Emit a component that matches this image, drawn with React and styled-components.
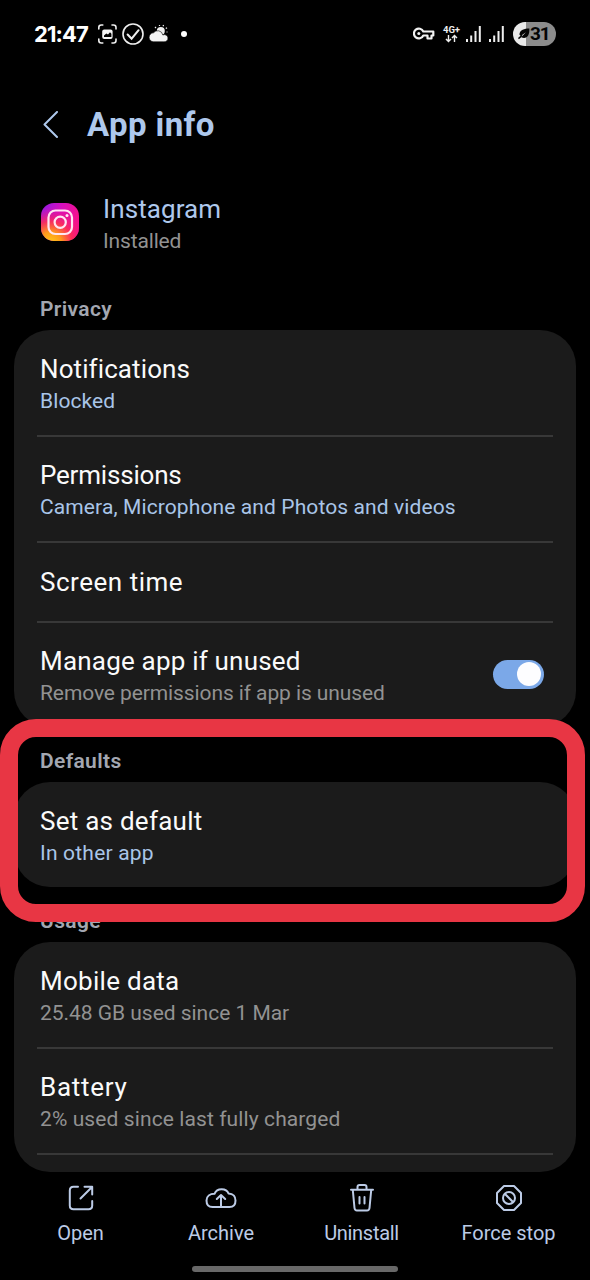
import React from 'react';
import styled, { createGlobalStyle } from 'styled-components';

const GlobalStyle = createGlobalStyle`
  * { box-sizing: border-box; }
  body {
    margin: 0;
    background: #000;
    font-family: Roboto, Inter, sans-serif;
  }
`;

const Screen = styled.div`
  width: 590px;
  height: 1280px;
  overflow: hidden;
  background: #000;
  color: #fafafa;
  display: flex;
  flex-direction: column;
`;

const StatusBar = styled.div`
  height: 68px;
  padding: 0 34px;
  display: flex;
  align-items: center;
  justify-content: space-between;
  flex-shrink: 0;
`;

const StatusGroup = styled.div`
  display: flex;
  align-items: center;
`;

const Clock = styled.span`
  font: 700 22px/24px Inter, sans-serif;
  letter-spacing: -0.9px;
  width: 63px;
  color: #fff;
`;

const Network = styled.span`
  display: flex;
  flex-direction: column;
  align-items: center;
  width: 19px;
  margin: 0 2px 0 7px;
  font: 700 9.500px/9px Roboto, sans-serif;
  color: #eee;
`;

const Battery = styled.div`
  width: 43px;
  height: 24px;
  margin-left: 4px;
  border-radius: 12px;
  display: flex;
  align-items: center;
  padding-left: 5px;
  background: linear-gradient(to right, #e9e9e9 13px, #8c8c8c 13px);
  color: #050505;
  font: 700 19px/24px Roboto, sans-serif;
  letter-spacing: -1.2px;
`;

const Header = styled.header`
  height: 114px;
  padding: 0 43px;
  display: flex;
  align-items: center;
  gap: 28px;
  flex-shrink: 0;
`;

const Title = styled.h1`
  margin: 0;
  font-size: 33px;
  line-height: 40px;
  font-weight: 700;
  letter-spacing: ${p => p.$track || 0}px;
  color: #aec8ec;
`;

const AppRow = styled.div`
  height: 93px;
  padding: 11px 41px 0;
  display: flex;
  gap: 24px;
  flex-shrink: 0;
`;

const AppIcon = styled.svg`
  width: 38px;
  height: 38px;
  margin-top: 10px;
`;

const Stack = styled.div`
  display: flex;
  flex-direction: column;
  flex: 1;
`;

const SectionLabel = styled.h2`
  margin: 0;
  height: 55px;
  padding: 18px 40px 0;
  font-size: 21px;
  line-height: 32px;
  font-weight: 600;
  letter-spacing: 0.35px;
  color: #a3a7b1;
  flex-shrink: 0;
`;

const Card = styled.section`
  width: 562px;
  height: ${p => p.$height}px;
  margin-left: 14px;
  border-radius: 36px;
  background: #1b1b1b;
  overflow: hidden;
  flex-shrink: 0;
`;

const Row = styled.div`
  height: ${p => p.$height || 106}px;
  padding: ${p => p.$top || 23}px 32px 0 26px;
  display: flex;
`;

const Divider = styled.div`
  height: 2px;
  margin: -1px 23px;
  background: #383838;
`;

const Label = styled.span`
  font-size: 26px;
  line-height: 32px;
  letter-spacing: ${p => p.$track || 0}px;
  color: ${p => p.$color || '#fafafa'};
`;

const Sub = styled.span`
  font-size: 21px;
  line-height: 32px;
  letter-spacing: ${p => p.$track || 0}px;
  color: ${p => (p.$accent ? '#a9c5e8' : '#929292')};
`;

const Switch = styled.span`
  width: 51px;
  height: 29px;
  margin-top: 15px;
  padding: 2px 3px;
  border-radius: 15px;
  background: #7ba8e8;
  display: flex;
  justify-content: flex-end;
  &::after {
    content: '';
    width: 24px;
    height: 24px;
    border-radius: 50%;
    background: #fdfdff;
  }
`;

const Highlighted = styled.div`
  position: relative;
  flex-shrink: 0;
`;

const Marker = styled.div`
  position: absolute;
  left: 0;
  top: -8px;
  width: 585px;
  height: 203px;
  border: 18px solid #e83644;
  border-radius: 36px;
  z-index: 1;
`;

const BottomBar = styled.nav`
  height: 94px;
  padding: 0 5px 0 10px;
  display: grid;
  grid-template-columns: 141px 140px 141px 153px;
  flex-shrink: 0;
`;

const Action = styled.div`
  display: flex;
  flex-direction: column;
  align-items: center;
  padding-top: 12px;
  gap: 5px;
  color: #bccbe6;
  font-size: 20px;
  line-height: 32px;
  letter-spacing: ${p => p.$track || 0}px;
  white-space: nowrap;
  svg {
    width: 28px;
    height: 28px;
    fill: none;
    stroke: currentColor;
    stroke-width: 2;
    stroke-linecap: round;
    stroke-linejoin: round;
  }
`;

const HomeBar = styled.div`
  width: 206px;
  height: 6px;
  border-radius: 3px;
  margin: 0 auto;
  background: #686868;
`;

const Signal = () => (
  <svg width="23" height="22" viewBox="0 0 23 22" fill="#eee">
    <rect x="3" y="16" width="2" height="3" />
    <rect x="7.2" y="12.5" width="2" height="6.5" />
    <rect x="11.5" y="8" width="2" height="11" />
    <rect x="15.8" y="3" width="2" height="16" />
  </svg>
);

const StatusLeft = () => (
  <StatusGroup>
    <Clock>21:47</Clock>
    <svg width="94" height="24" viewBox="97 22 94 24" fill="none">
      <g stroke="#eee" strokeWidth="1.6" strokeLinecap="round">
        <path d="M98.8 29v-1.500q0-2.500 2.500-2.500h1.500M112 25h1.500q2.500 0 2.500 2.500V29M116 39v1.500q0 2.500-2.500 2.500H112M102.800 43h-1.500q-2.500 0-2.500-2.500V39" />
        <circle cx="133" cy="34" r="10" />
        <path d="M127.600 34.500l4 4.200 7-8.500" strokeWidth="2" />
      </g>
      <rect x="102.200" y="29.500" width="10.400" height="9.500" rx="2" fill="#f4f4f4" />
      <path d="M104 37v-1.500l2.300-2 1.700 1 2-2.200 1.400 1.500V37z" fill="#000" />
      <circle cx="160.800" cy="31" r="4" fill="#eee" />
      <path d="M156 28l-1-1M159.500 26v-1M163 26.300l.6-1.200M165.800 28.500l1.200-.8M166.500 32h1" stroke="#eee" strokeWidth="1.200" />
      <path d="M153.700 41.800a4.500 4.500 0 0 1-.2-9 5.200 5.200 0 0 1 9.300 2.200 3.600 3.600 0 1 1 1 6.800z" fill="#f4f4f4" stroke="#000" strokeWidth=".6" />
      <circle cx="184" cy="34" r="3" fill="#fff" />
    </svg>
  </StatusGroup>
);

const StatusRight = () => (
  <StatusGroup>
    <svg width="22" height="14" viewBox="0 0 22 14" fill="none" stroke="#f2f2f2" strokeWidth="2.200" strokeLinejoin="round">
      <path d="M10.300 4.500H20.300V8.500H18.500V11.500H14.500V8.500H10.300A4.900 4.900 0 1 1 10.300 4.500Z" />
      <circle cx="5.800" cy="6.500" r="1.500" fill="#f2f2f2" stroke="none" />
    </svg>
    <Network>
      4G+
      <svg width="13" height="9" viewBox="0 0 13 9" fill="none" stroke="#eee" strokeWidth="1.400">
        <path d="M3.500 1v6.500M1 5l2.500 2.600L6 5M9.500 8V1.500M7 4l2.500-2.600L12 4" />
      </svg>
    </Network>
    <Signal />
    <Signal />
    <Battery>
      <svg width="12" height="14" viewBox="0 0 13 14">
        <path d="M12.300 1C7 1 2 2.500 1.500 7.500L3 9.200 8.500 5 3.500 10.500C9 13 12.800 9 12.300 1z" fill="#050505" />
        <path d="M.5 12l4-3.500" stroke="#050505" strokeWidth="1.600" />
      </svg>
      31
    </Battery>
  </StatusGroup>
);

const InstagramIcon = () => (
  <AppIcon viewBox="0 0 38 38">
    <defs>
      <linearGradient id="igBase" x1="0" y1="0" x2="1" y2="0.3">
        <stop offset="0" stopColor="#8a1be8" />
        <stop offset="0.5" stopColor="#d410c0" />
        <stop offset="1" stopColor="#f5108c" />
      </linearGradient>
      <radialGradient id="igGlow" cx="0.25" cy="1.050" r="0.95">
        <stop offset="0" stopColor="#ffcc18" />
        <stop offset="0.300" stopColor="#ff9a1c" />
        <stop offset="0.600" stopColor="#ff3050" stopOpacity="0.850" />
        <stop offset="1" stopColor="#f0108c" stopOpacity="0" />
      </radialGradient>
    </defs>
    <rect width="38" height="38" rx="13" fill="url(#igBase)" />
    <rect width="38" height="38" rx="13" fill="url(#igGlow)" />
    <g fill="none" stroke="#ffe6f2" strokeWidth="2.200">
      <rect x="7.500" y="7.500" width="23.500" height="23.500" rx="7" />
      <circle cx="19.200" cy="19.300" r="5.600" />
    </g>
    <circle cx="26" cy="12.500" r="1.500" fill="#ffe6f2" />
  </AppIcon>
);

function App() {
  return (
    <>
      <GlobalStyle />
      <Screen>
        <StatusBar>
          <StatusLeft />
          <StatusRight />
        </StatusBar>

        <Header>
          <svg width="16" height="28" viewBox="0 0 16 28" fill="none" stroke="#aec8ec" strokeWidth="2" strokeLinecap="round" strokeLinejoin="round">
            <path d="M14 1L1.500 13.500L14 26" />
          </svg>
          <Title $track={0.4}>App info</Title>
        </Header>

        <AppRow>
          <InstagramIcon />
          <Stack>
            <Label $color="#aec8ec" $track={0.1}>Instagram</Label>
            <Sub $track={-0.15}>Installed</Sub>
          </Stack>
        </AppRow>

        <SectionLabel>Privacy</SectionLabel>
        <Card $height={397}>
          <Row>
            <Stack>
              <Label $track={0.1}>Notifications</Label>
              <Sub $accent $track={0.1}>Blocked</Sub>
            </Stack>
          </Row>
          <Divider />
          <Row>
            <Stack>
              <Label $track={-0.2}>Permissions</Label>
              <Sub $accent $track={0.11}>Camera, Microphone and Photos and videos</Sub>
            </Stack>
          </Row>
          <Divider />
          <Row $height={80} $top={24}>
            <Label $track={0.52}>Screen time</Label>
          </Row>
          <Divider />
          <Row>
            <Stack>
              <Label $track={0.2}>Manage app if unused</Label>
              <Sub $track={-0.1}>Remove permissions if app is unused</Sub>
            </Stack>
            <Switch />
          </Row>
        </Card>

        <Highlighted>
          <Marker />
          <SectionLabel>Defaults</SectionLabel>
          <Card $height={105}>
            <Row>
              <Stack>
                <Label $track={0.25}>Set as default</Label>
                <Sub $accent $track={0.2}>In other app</Sub>
              </Stack>
            </Row>
          </Card>
        </Highlighted>

        <SectionLabel>Usage</SectionLabel>
        <Card $height={230}>
          <Row>
            <Stack>
              <Label $track={0.28}>Mobile data</Label>
              <Sub $track={-0.03}>25.48 GB used since 1 Mar</Sub>
            </Stack>
          </Row>
          <Divider />
          <Row>
            <Stack>
              <Label $track={0.7}>Battery</Label>
              <Sub $track={0.1}>2% used since last fully charged</Sub>
            </Stack>
          </Row>
          <Divider />
        </Card>

        <BottomBar>
          <Action>
            <svg viewBox="0 0 28 28">
              <path d="M11 2.800H6.500Q2.800 2.800 2.800 6.500V21.500Q2.800 25.200 6.500 25.200H21.500Q25.200 25.200 25.200 21.500V17M17.500 2.800H25.200V10.500M25 3L13.500 14.500" />
            </svg>
            Open
          </Action>
          <Action>
            <svg viewBox="0 0 28 28" style={{ overflow: 'visible' }}>
              <path d="M5.500 23H22.500C27 23 28.500 20 28.500 16.500S26.500 9.500 21.500 9.500C19.500 4 10 3.500 7.500 9.800C3 9.800-.5 12-.5 16.500S1.500 23 5.500 23Z" />
              <path d="M14 22V11.500M9.800 15L14 11L18.200 15" />
            </svg>
            Archive
          </Action>
          <Action $track={-0.3}>
            <svg viewBox="0 0 28 28">
              <path d="M3 5.800H25M9.500 5.500V3Q9.500 1 11.500 1H16.500Q18.500 1 18.500 3V5.500M4.800 6L6.500 24Q6.800 26.500 9 26.500H19Q21.200 26.500 21.500 24L23.200 6M11.500 13V19.500M16.500 13V19.500" />
            </svg>
            Uninstall
          </Action>
          <Action>
            <svg viewBox="0 0 28 28">
              <path d="M9 2H19L26 9V19L19 26H9L2 19V9Z" />
              <circle cx="14" cy="14" r="6" />
              <path d="M10 10L18 18" />
            </svg>
            Force stop
          </Action>
        </BottomBar>
        <HomeBar />
      </Screen>
    </>
  );
}

export default App;
